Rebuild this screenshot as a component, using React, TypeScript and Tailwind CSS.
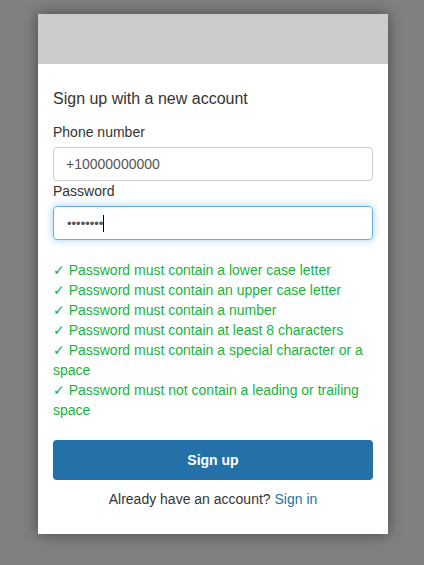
const rules = [
  'Password must contain a lower case letter',
  'Password must contain an upper case letter',
  'Password must contain a number',
  'Password must contain at least 8 characters',
  'Password must contain a special character or a space',
  'Password must not contain a leading or trailing space',
];

export default function App() {
  return (
    <div
      className="min-h-[565px] w-full bg-[#808080] pt-[14px]"
      style={{ fontFamily: '"Liberation Sans", Arial, sans-serif' }}
    >
      <div className="mx-[38px] w-[350px] bg-white shadow-[0_0_14px_rgba(0,0,0,0.45)]">
        {/* Banner */}
        <div className="h-[50px] bg-[#cccccc]" />

        <div className="px-[15px] pt-[24px] pb-[25px] text-[#333]">
          <h2 className="text-[16px] leading-[22px]">Sign up with a new account</h2>

          <label className="mt-[12px] mb-[5px] block text-[14px] leading-[20px]">Phone number</label>
          <input
            readOnly
            value="+10000000000"
            className="block h-[34px] w-full rounded-[4px] border border-[#ccc] px-[12px] text-[14px] text-[#555] outline-none"
          />

          <label className="mb-[5px] block text-[14px] leading-[20px]">Password</label>
          <div className="flex h-[34px] w-full items-center rounded-[4px] border border-[#66afe9] px-[13px] text-[#555] shadow-[0_0_8px_rgba(102,175,233,0.6)]">
            <span className="text-[13px] leading-none">••••••••</span>
            <span className="h-[17px] w-px bg-black" />
          </div>

          <ul className="mt-[20px] text-[14px] leading-[20px] text-[#14b53a]">
            {rules.map((r) => (
              <li key={r}>
                <span
                  style={{ fontFamily: '"DejaVu Sans", sans-serif' }}
                  className="text-[14px] font-bold leading-none"
                >
                  ✓
                </span>{' '}
                {r}
              </li>
            ))}
          </ul>

          <button className="mt-[20px] block h-[40px] w-full rounded-[4px] bg-[#2471aa] text-[14px] font-bold text-white">
            Sign up
          </button>

          <p className="mt-[9px] text-center text-[14px] leading-[20px]">
            Already have an account? <span className="text-[#2471aa]">Sign in</span>
          </p>
        </div>
      </div>
    </div>
  );
}
